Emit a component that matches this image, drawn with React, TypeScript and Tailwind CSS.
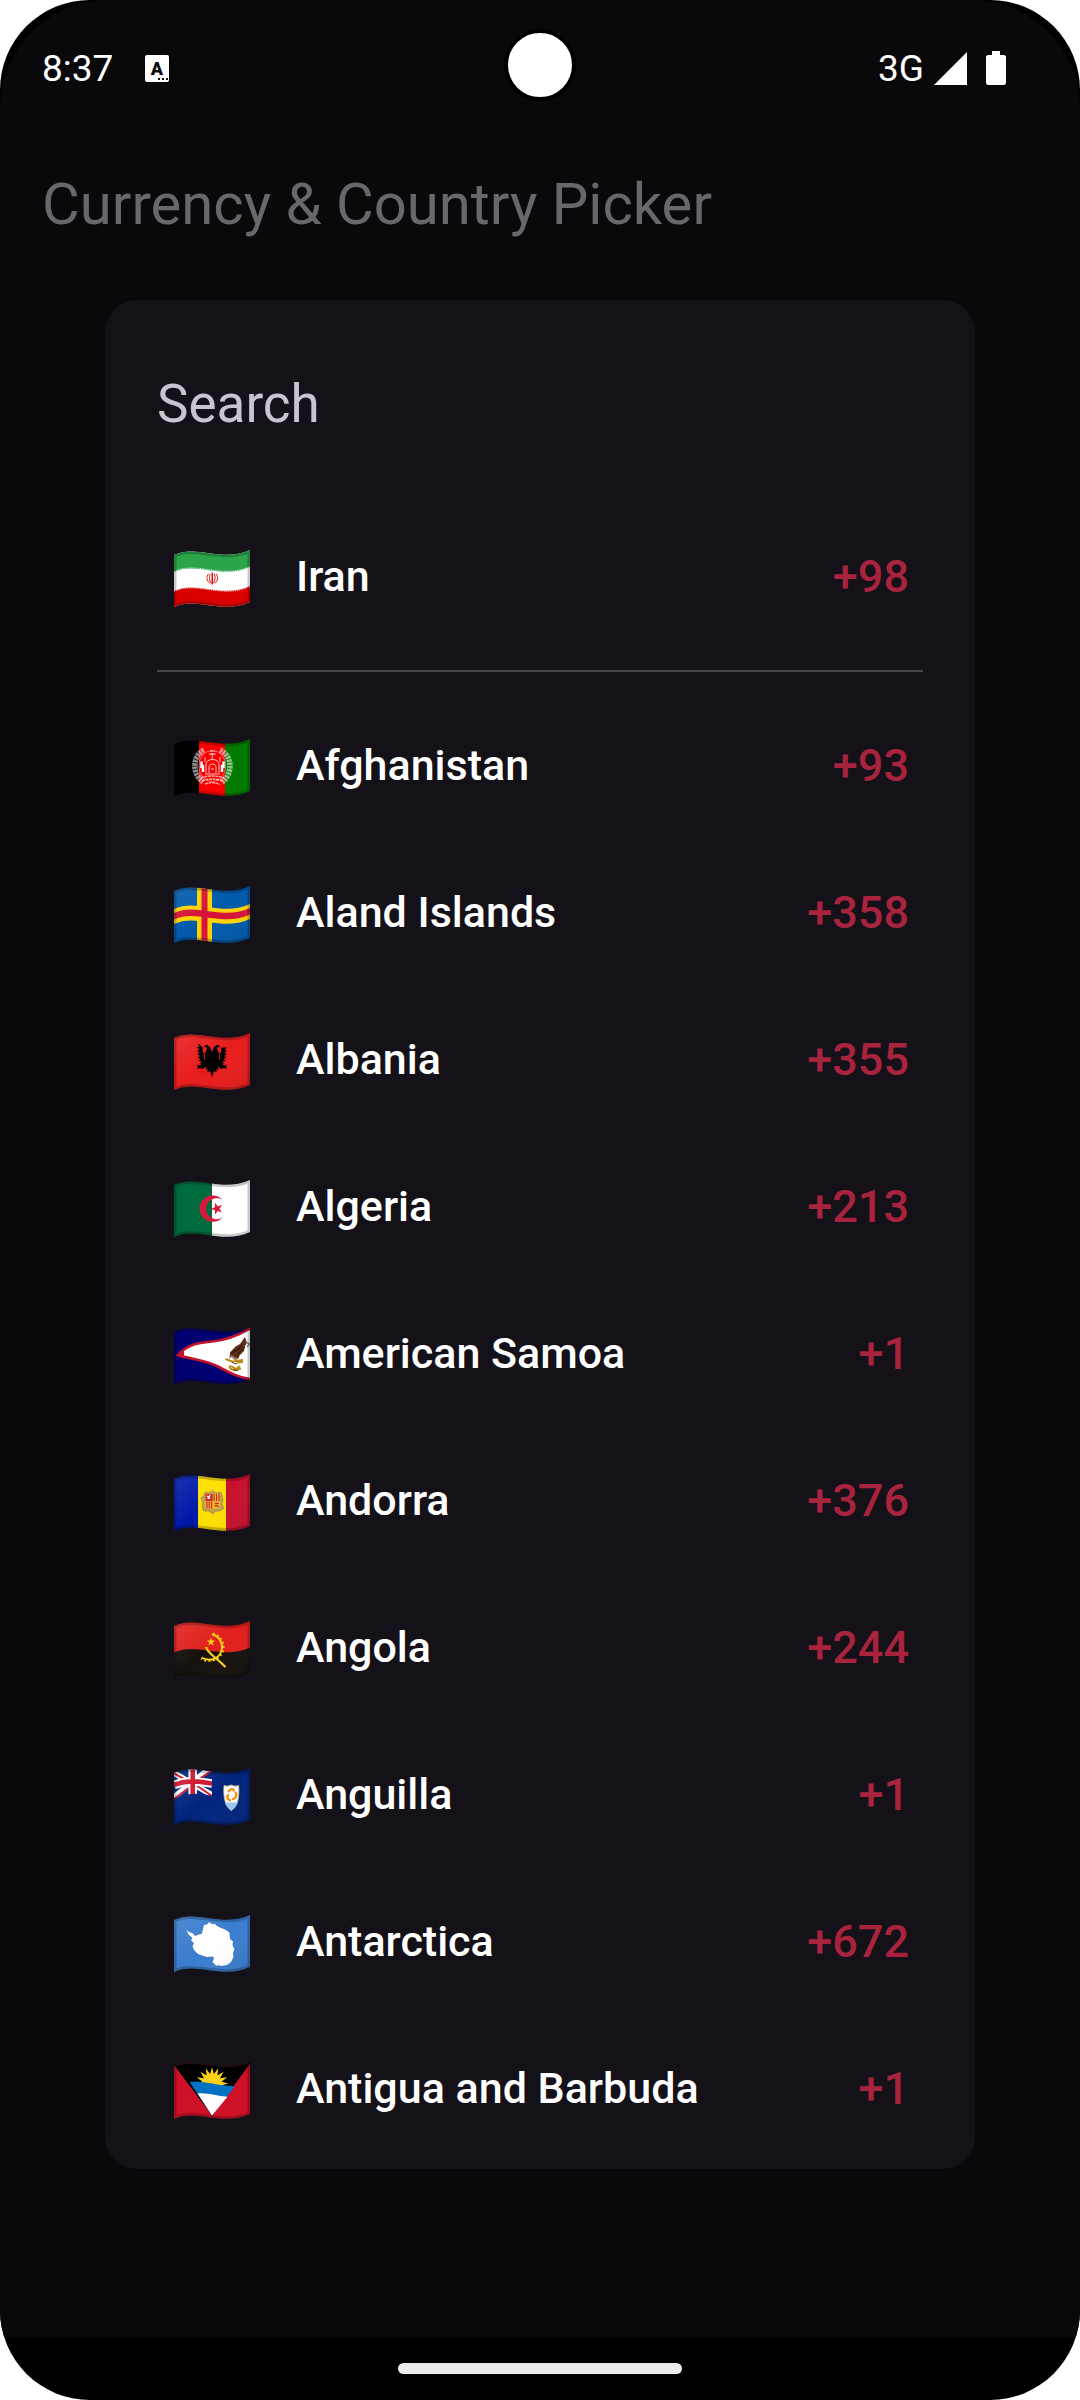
import type { ReactNode } from "react";

type Country = { code: string; name: string; dial: string };

const pinned: Country = { code: "ir", name: "Iran", dial: "+98" };

const countries: Country[] = [
  { code: "af", name: "Afghanistan", dial: "+93" },
  { code: "ax", name: "Aland Islands", dial: "+358" },
  { code: "al", name: "Albania", dial: "+355" },
  { code: "dz", name: "Algeria", dial: "+213" },
  { code: "as", name: "American Samoa", dial: "+1" },
  { code: "ad", name: "Andorra", dial: "+376" },
  { code: "ao", name: "Angola", dial: "+244" },
  { code: "ai", name: "Anguilla", dial: "+1" },
  { code: "aq", name: "Antarctica", dial: "+672" },
  { code: "ag", name: "Antigua and Barbuda", dial: "+1" },
];

const unlit = ["ir", "af", "dz", "as", "ag"];

/* A line that follows the cloth's wave, starting at height y on the left edge. */
const wave = (y: number) => `M0 ${y}C22 ${y - 11} 48 ${y + 8} 76 ${y - 5}`;

/* A horizontal stripe of the waving cloth between two heights. */
const band = (top: number, bottom: number) =>
  `${wave(top)}V${bottom - 5}C48 ${bottom + 8} 22 ${bottom - 11} 0 ${bottom}Z`;

const star = (cx: number, cy: number, r: number, turn = -90, points = 5, inner = 0.4) =>
  Array.from({ length: points * 2 }, (_, i) => {
    const radius = i % 2 ? r * inner : r;
    const angle = ((turn + (i * 180) / points) * Math.PI) / 180;
    return `${(cx + radius * Math.cos(angle)).toFixed(2)},${(cy + radius * Math.sin(angle)).toFixed(2)}`;
  }).join(" ");

const cloth: Record<string, ReactNode> = {
  ir: (
    <>
      <rect y="-4" width="76" height="64" fill="#fff" />
      <path d={band(3, 22)} fill="#2ba44a" />
      <path d={band(41, 60)} fill="#da0000" />
      <path d={wave(21.5)} fill="none" stroke="#fff" strokeWidth="1" strokeDasharray="1.2 1" opacity=".8" />
      <path d={wave(41.5)} fill="none" stroke="#fff" strokeWidth="1" strokeDasharray="1.2 1" opacity=".8" />
      <g fill="none" stroke="#da0000">
        <path d="M38.300 22.500V34.500" strokeWidth="1.400" />
        <path d="M36.300 24C35 27 35.200 30.500 37.200 33.200M40.300 24C41.600 27 41.400 30.500 39.400 33.200" strokeWidth=".9" />
        <path d="M34.600 23.800C32 27 32.600 31 35.800 33M42 23.800C44.600 27 44 31 40.800 33" strokeWidth=".9" />
      </g>
    </>
  ),
  af: (
    <>
      <rect y="-4" width="26" height="64" fill="#000" />
      <rect x="25" y="-4" width="27" height="64" fill="#f80000" />
      <rect x="51" y="-4" width="26" height="64" fill="#007a00" />
      <g fill="none" stroke="#fff">
        <path d="M30 11C18 17 18 35 29 43" strokeWidth="5.500" opacity=".55" strokeDasharray="2.600 .7" />
        <path d="M46 11C59 17 59 35 48 43" strokeWidth="5.500" opacity=".55" strokeDasharray="2.600 .7" />
        <ellipse cx="38.300" cy="27" rx="13.500" ry="15.500" strokeWidth=".8" opacity=".5" />
        <path d="M29 33V26L27.500 29V22.500M48 33V26L49.500 29V22.500" strokeWidth="2.400" />
        <path
          d="M32 34V25C32 19 45 19 45 25V34M35 34V28C35 24 42 24 42 28V34M31 35H46M38.300 14V20M31 23V18M46 23V18M37 30H40"
          strokeWidth="1"
          opacity=".75"
        />
        <path
          d="M27 39Q38 35 50 39M28 42Q38 38 49 42M31 45Q38 42 46 45.500M36 12H41M35 15H42"
          strokeWidth="1.500"
          opacity=".65"
          strokeDasharray="3 .6"
        />
      </g>
    </>
  ),
  ax: (
    <>
      <rect y="-4" width="76" height="64" fill="#0059ab" />
      <path d={band(23, 38)} fill="#ffd300" />
      <rect x="23" y="-4" width="15" height="64" fill="#ffd300" />
      <path d={band(27, 33.5)} fill="#d6123a" />
      <rect x="27.500" y="-4" width="6" height="64" fill="#d6123a" />
    </>
  ),
  al: (
    <>
      <rect y="-4" width="76" height="64" fill="#e81c1c" />
      <path
        fill="#000"
        d="M38 19L36 14L32.500 11.500L29.500 14L33 14.500L32 19L29 20L28.500 14L24 10.500L25 14L22.700 14L25.500 17L23 17.500L25.500 20L23 21L26 23L23.500 24.500L26.500 26L24.500 28L27.500 28.500L26 31L29 30.500L25 32.500L22.700 31.500L24 34L22.700 36L26 35L29 36L32 33.500L32 37L34 36L33 39.500L36 38L38 44L40 38L43 39.500L42 36L44.500 37L44 33.500L47 36L50 35L53 36L52 34L53 31.500L51 32.500L47 30.500L50 31L48.500 28.500L51.500 28L49.500 26L52.500 24.500L50 23L53 21L50.500 20L53 17.500L50.500 17L53 14.500L47.500 14.500L47 20L44 19L43 14.500L46.500 14L43.500 11.500L40 14Z"
      />
      <path d="M30.500 17V27M45.500 17V27" stroke="#e81c1c" strokeWidth=".8" />
    </>
  ),
  dz: (
    <>
      <rect y="-4" width="38" height="64" fill="#006b3c" />
      <rect x="38" y="-4" width="38" height="64" fill="#fff" />
      <path d="M48.500 19.800A13.200 13.200 0 1 0 48.500 37.500A10.600 10.600 0 1 1 48.500 19.800Z" fill="#d61a3c" />
      <polygon points={star(43, 28.7, 6.2, 180)} fill="#d61a3c" />
    </>
  ),
  as: (
    <>
      <rect y="-4" width="76" height="64" fill="#000073" />
      <path
        d="M4 28C14 17 24 16 38 14.500C54 13 66 8 80 -1V52.500C66 51.500 56 46 44 39.500C32 33 20 33 4 28Z"
        fill="#fff"
        stroke="#c4122e"
        strokeWidth="2.600"
      />
      <path d="M1 28.500L10 23.500V31.500Z" fill="#c4122e" />
      <path
        d="M71 10L73 16L71 19L70 24L66 28L64 32L61 31L57.500 28.500L55.500 32L56 25.500L61 20L66 17Z"
        fill="#5c2c16"
      />
      <path d="M60 25L69 18M63 28L71 20M57 26L67 21" stroke="#2b130a" strokeWidth=".9" />
      <path d="M57 29L61 32M72 15L75.500 17L73 20" fill="none" stroke="#8b8b8b" strokeWidth="1.800" />
      <path
        d="M51.500 32L58 34.500L69 33M60 31L64 35.500L69 35M56 38.500C54.500 43 60 44 67 41.500M57 39L62 42L66 39"
        fill="none"
        stroke="#b98a1d"
        strokeWidth="2"
      />
      <path d="M58 35.500L63 37M59 43L64 43.500" stroke="#5c3d10" strokeWidth="1" />
    </>
  ),
  ad: (
    <>
      <rect y="-4" width="25" height="64" fill="#0018a8" />
      <rect x="24" y="-4" width="28" height="64" fill="#fedf00" />
      <rect x="52" y="-4" width="25" height="64" fill="#c8102e" />
      <path
        d="M31 18L35 19L38.500 16.500L42 19L46.500 18L48 21L49 26L48 30L50 34L46 37L42 37L38.500 40L35 37L30 37L28 33L29 29L27 24L30 22Z"
        fill="#c0a050"
        stroke="#a58a42"
        strokeWidth=".8"
      />
      <rect x="31.500" y="20" width="7" height="7" fill="#d62a2a" />
      <rect x="39" y="20" width="7" height="7" fill="#f5c518" />
      <rect x="31.500" y="27.500" width="7" height="7" fill="#f5c518" />
      <path d="M39 27.500H46V31Q46 34.500 39 34.500Z" fill="#f5c518" />
      <path
        d="M40 20V27M42.500 20V27M45 20V27M33 27.500V34.500M35.200 27.500V34.500M37.500 27.500V34.500"
        stroke="#d0203a"
        strokeWidth="1.200"
      />
      <path d="M33 22L36 24.500M36 21L34 25" stroke="#fff" strokeWidth="1.300" />
      <path d="M40.500 29.500H45M40.500 32H44.500" stroke="#d0203a" strokeWidth="1.300" />
    </>
  ),
  ao: (
    <>
      <rect y="-4" width="76" height="64" fill="#15100c" />
      <path d={band(3, 31.5)} fill="#e0201c" />
      <polygon points={star(37, 21, 4.5)} fill="#fcd116" />
      <g fill="none" stroke="#fcd116">
        <path d="M38 13.500C46 15 50 24 47 31C44 38.500 35 41 27.500 36.500" strokeWidth="2" />
        <path
          d="M39 12.500C48 14.500 52 24 48.500 31.500C45 39.500 35 42.500 27 38"
          strokeWidth="1.700"
          strokeDasharray="1.800 2.600"
        />
        <path d="M32 26C34 33 42 36 51.500 46" strokeWidth="2.200" />
      </g>
    </>
  ),
  ai: (
    <>
      <rect y="-4" width="76" height="64" fill="#00247d" />
      <path d="M0 5L38 27M0 29L36 0" stroke="#fff" strokeWidth="5.500" />
      <path d="M0 5.500L16 14M22 17L38 28M0 31L16 19M22 13L38 2.500" stroke="#cf142b" strokeWidth="2" />
      <path d="M0 17C14 11 26 14 38 15.500M18.700 0V27" fill="none" stroke="#fff" strokeWidth="8.500" />
      <path d="M0 17C14 11 26 14 38 15.500M18.700 0V27" fill="none" stroke="#cf142b" strokeWidth="4.600" />
      <path d="M0 31C14 24 26 25 38 28H44V38H0Z" fill="#00247d" />
      <rect x="38" y="-4" width="8" height="40" fill="#00247d" />
      <path
        d="M50 17.500Q53.500 19 57.300 17Q61 19 64.700 17.500C65.500 29 64 38 57.300 42.700C51 38 49 29 50 17.500Z"
        fill="#fff"
        stroke="#c8b98a"
        strokeWidth=".8"
      />
      <path d="M51 34.500H63.800C62.600 38 60.500 40.500 57.300 42.200C54 40.500 52 38 51 34.500Z" fill="#9cc8f4" />
      <path
        d="M54 24C56 20.500 60 20 60 23.500M61 24C64 27 61.500 31.500 58 31M57 32.500C53 32 52 28 55 26.500"
        fill="none"
        stroke="#ff8c0a"
        strokeWidth="2.200"
      />
    </>
  ),
  aq: (
    <>
      <rect y="-4" width="76" height="64" fill="#3a7dce" />
      <path
        fill="#fff"
        d="M12 14L14 16.500L19 18.500L21 21L28 18.500L30 10L33 9.500L35.500 7L37.500 9L41 9L43 11L47 13L51 14.500L55.500 17.500L56 24L59 26.500L58.500 30L60.500 34L59 38L59.500 42L57 47L53 50L47 51L44 50L42.500 51L38.500 47L40 43L38.500 41.500L33 42L28 40.500L24 39L20 35L18.500 31L20 28.500L17 25L18.500 23L14.500 19.500Z"
      />
    </>
  ),
  ag: (
    <>
      <rect y="-4" width="76" height="64" fill="#ce1126" />
      <path d="M0 3V-6H78V-1L38 53.500Z" fill="#000" />
      <path d="M15.500 20C28 17.500 44 23.500 61 24.300L38 53.500Z" fill="#0072c6" />
      <path d="M23.500 31.500C34 30.500 43 34 53.500 34.800L38 53.500Z" fill="#fff" />
      <clipPath id="sky-ag">
        <path d="M0 -6H76V24.500H61C44 23.500 28 18.500 15.500 20H0Z" />
      </clipPath>
      <polygon points={star(38, 21.5, 16.5, -90, 16, 0.58)} fill="#fcd116" clipPath="url(#sky-ag)" />
    </>
  ),
};

function Flag({ code }: { code: string }) {
  return (
    <svg viewBox="0 -4 76 62" className="h-[62px] w-[76px] shrink-0" aria-hidden="true">
      <defs>
        <clipPath id={`cloth-${code}`}>
          <path d={band(5, 57)} />
        </clipPath>
        <linearGradient id={`light-${code}`} x1="0" y1="0" x2="1" y2="1">
          <stop offset="0" stopColor="#fff" stopOpacity=".12" />
          <stop offset=".5" stopColor="#fff" stopOpacity="0" />
          <stop offset="1" stopColor="#000" stopOpacity=".1" />
        </linearGradient>
      </defs>
      <g clipPath={`url(#cloth-${code})`}>
        {cloth[code]}
        {!unlit.includes(code) && <rect y="-4" width="76" height="64" fill={`url(#light-${code})`} />}
        <path d={band(5, 57)} fill="none" stroke="#000" strokeOpacity=".22" strokeWidth="5" />
      </g>
    </svg>
  );
}

function CountryRow({ country }: { country: Country }) {
  return (
    <button type="button" className="flex h-[147px] w-full items-center pr-[14px] pl-[17px] text-left font-medium">
      <Flag code={country.code} />
      <span className="ml-[46px] flex-1 text-[43px] leading-none text-white">{country.name}</span>
      <span className="text-[45px] leading-none text-[#a8233d]">{country.dial}</span>
    </button>
  );
}

function StatusBar() {
  return (
    <div className="relative flex h-[136px] items-center pr-[74px] pl-[42px] text-[37px] leading-none text-white">
      <span>8:37</span>
      <svg viewBox="0 0 24 27" className="ml-8 h-[27px] w-6" aria-hidden="true">
        <rect width="24" height="27" rx="2" fill="#fff" />
        <text x="12" y="20" textAnchor="middle" fontSize="18" fontWeight="900" fill="#09090b">
          A
        </text>
        <path d="M13 24h2M17 24h2M21 24h2" stroke="#09090b" strokeWidth="2" />
      </svg>
      <span className="ml-auto">3G</span>
      <svg viewBox="0 0 33 33" className="ml-[10px] h-[33px] w-[33px]" aria-hidden="true">
        <path d="M0 33L33 0V33Z" fill="#fff" />
      </svg>
      <svg viewBox="0 0 20 34" className="ml-[19px] h-[34px] w-5" aria-hidden="true">
        <path d="M6 0H14V4H18.500L20 5.500V32.500L18.500 34H1.500L0 32.500V5.500L1.500 4H6Z" fill="#fff" />
      </svg>
      <div className="absolute top-[29px] left-1/2 size-[72px] -translate-x-1/2 rounded-full border-4 border-black bg-white" />
    </div>
  );
}

export default function App() {
  return (
    <div className="min-h-screen bg-white font-['Roboto',sans-serif]">
      <div className="flex min-h-screen flex-col overflow-hidden rounded-[90px] bg-black">
        <main className="flex flex-1 flex-col rounded-t-[108px] bg-[#09090b]">
          <StatusBar />
          <header className="flex h-[136px] items-center px-[42px]">
            <h1 className="text-[58px] leading-none text-[#69676b]">Currency &amp; Country Picker</h1>
          </header>
          <section
            role="dialog"
            aria-label="Choose a country"
            className="mx-[105px] mt-7 rounded-[32px] bg-[#141118] px-[52px] pb-[7px]"
          >
            <input
              type="text"
              aria-label="Search"
              placeholder="Search"
              className="block h-[203px] w-full bg-transparent pt-1 text-[53px] text-white outline-none placeholder:text-[#cac4d0]"
            />
            <CountryRow country={pinned} />
            <hr className="my-5 border-t-2 border-[#49454f]" />
            <ul>
              {countries.map((country) => (
                <li key={country.code}>
                  <CountryRow country={country} />
                </li>
              ))}
            </ul>
          </section>
        </main>
        <footer className="flex h-[63px] items-center justify-center">
          <div className="h-[11px] w-[284px] rounded-full bg-[#ebebeb]" />
        </footer>
      </div>
    </div>
  );
}
